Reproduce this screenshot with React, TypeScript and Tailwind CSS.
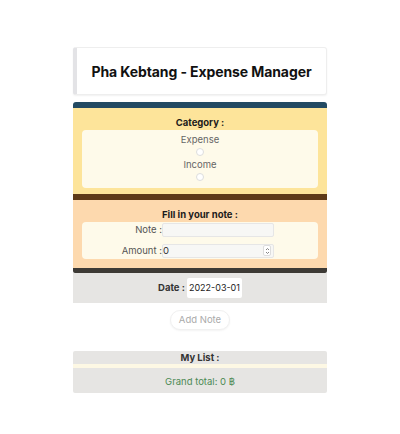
import { useState } from 'react';

export default function App() {
  const [note, setNote] = useState('');
  const [amount, setAmount] = useState('0');

  return (
    <div className="min-h-screen bg-white pt-[47px] font-['Inter',sans-serif] text-[#1b1b1b]">
      <div className="mx-auto w-[254px]">
        {/* Header */}
        <div className="h-[48px] flex items-center justify-center bg-white rounded-[3px] border border-[#eeeeee] border-l-[4px] border-l-[#e3e3e6] shadow-[0_1px_2px_rgba(0,0,0,0.06)]">
          <h1 className="text-[14px] font-bold tracking-[-0.1px] text-[#111]">
            Pha Kebtang - Expense Manager
          </h1>
        </div>

        {/* Form */}
        <div className="mt-[7px]">
          <div className="h-[6px] bg-[#234a63] rounded-t-[3px]"></div>

          {/* Category */}
          <div className="bg-[#fde49a] px-[9px] pt-[8px] pb-[6px]">
            <p className="text-center text-[9.5px] font-bold leading-[13px]">Category :</p>
            <div className="mt-[1px] bg-[#fefaea] rounded-[4px] h-[58px] flex flex-col items-center pt-[4px] text-[9.5px] text-[#666]">
              <span className="leading-[11px]">Expense</span>
              <span className="mt-[3px] w-[8px] h-[8px] rounded-full border border-[#ddd] bg-white"></span>
              <span className="mt-[3px] leading-[11px]">Income</span>
              <span className="mt-[3px] w-[8px] h-[8px] rounded-full border border-[#ddd] bg-white"></span>
            </div>
          </div>

          <div className="h-[6px] bg-[#5e3a17]"></div>

          {/* Note */}
          <div className="bg-[#fdd9ae] px-[9px] pt-[8px] pb-[9px]">
            <p className="text-center text-[9.5px] font-bold leading-[13px]">Fill in your note :</p>
            <div className="mt-[1px] bg-[#fefaea] rounded-[4px] h-[37px] flex flex-col justify-center gap-[6px] text-[9.5px] text-[#555]">
              <div className="flex items-center">
                <span className="w-[80px] text-right">Note :</span>
                <input
                  value={note}
                  onChange={(e) => setNote(e.target.value)}
                  className="w-[112px] h-[14px] bg-[#f7f7f5] border border-[#e6e6e6] rounded-[2px] outline-none px-[2px] text-[9px]"
                />
              </div>
              <div className="flex items-center">
                <span className="w-[80px] text-right">Amount :</span>
                <div className="w-[112px] h-[14px] bg-[#f7f7f5] border border-[#e6e6e6] rounded-[2px] flex items-center">
                  <input
                    value={amount}
                    onChange={(e) => setAmount(e.target.value)}
                    className="flex-1 min-w-0 bg-transparent outline-none px-0 text-[9.5px] text-[#333]"
                  />
                  <span className="mr-[2px] w-[8px] h-[11px] rounded-[2px] border border-[#ddd] bg-white flex items-center justify-center">
                    <svg width="5" height="8" viewBox="0 0 5 8" fill="none" stroke="#777" strokeWidth="0.9">
                      <path d="M1 3 L2.5 1.5 L4 3" />
                      <path d="M1 5 L2.5 6.5 L4 5" />
                    </svg>
                  </span>
                </div>
              </div>
            </div>
          </div>

          <div className="h-[5px] bg-[#3d3a35] rounded-b-[2px]"></div>

          {/* Date */}
          <div className="bg-[#e6e5e3] h-[30px] flex items-center justify-center gap-[2px]">
            <span className="text-[9.5px] font-bold text-[#333]">Date :</span>
            <span className="bg-white rounded-[2px] px-[2px] py-[3px] text-[9px] text-[#222]">
              2022-03-01
            </span>
          </div>

          <div className="flex justify-center mt-[7px]">
            <button className="h-[20px] px-[8px] rounded-full bg-white border border-[#f1f1f1] shadow-[0_1px_2px_rgba(0,0,0,0.05)] text-[9.5px] text-[#aaa]">
              Add Note
            </button>
          </div>
        </div>

        {/* List */}
        <div className="mt-[21px] bg-[#e6e5e3] rounded-[2px] h-[42px] flex flex-col">
          <p className="text-center text-[9.5px] font-bold leading-[13px] text-[#333]">My List :</p>
          <div className="h-[4px] bg-[#fdf8e4]"></div>
          <div className="flex-1 flex items-end justify-center pb-[4px]">
            <span className="text-[9.5px] text-[#4d8a55]">Grand total: 0 ฿</span>
          </div>
        </div>
      </div>
    </div>
  );
}
